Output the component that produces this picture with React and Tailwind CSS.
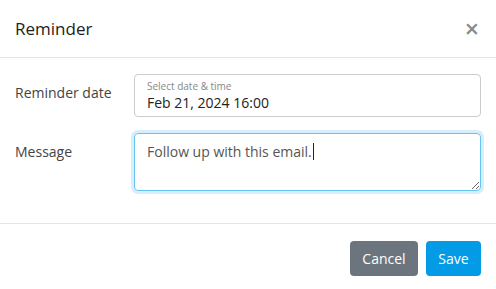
import { useState } from 'react'

export default function App() {
  const [message, setMessage] = useState('Follow up with this email.')

  return (
    <div className="w-[496px] h-[289px] bg-white text-[#333] overflow-hidden" style={{ fontFamily: '"Open Sans", "Noto Sans", sans-serif' }}>
      {/* header */}
      <div className="h-[58px] flex items-center justify-between pl-[15px] pr-[17px] border-b border-[#e5e5e5]">
        <h2 className="text-[17px] text-[#222] leading-none">Reminder</h2>
        <button className="text-[25px] leading-none font-semibold text-[#8a8a8a] -mt-[1px]">×</button>
      </div>

      {/* body */}
      <div className="pt-[16px] pb-[32px] px-[15px] flex flex-col gap-[16px]">
        <div className="flex">
          <label className="w-[119px] shrink-0 pt-[9px] text-[14px] leading-5 text-[#444]">Reminder date</label>
          <div className="flex-1 h-[43px] border border-[#ccc] rounded-[4px] px-[12px] pt-[5px] flex flex-col">
            <span className="text-[10px] leading-[13px] text-[#888]">Select date &amp; time</span>
            <span className="text-[14px] leading-[20px] text-[#222]">Feb 21, 2024 16:00</span>
          </div>
        </div>
        <div className="flex">
          <label className="w-[119px] shrink-0 pt-[9px] text-[14px] leading-5 text-[#444]">Message</label>
          <div className="flex-1 relative">
            <textarea
              value={message}
              onChange={e => setMessage(e.target.value)}
              className="block w-full h-[58px] border border-[#66c4f2] rounded-[4px] px-[12px] py-[8px] text-[14px] leading-5 text-[#555] outline-none ring-[3px] ring-[#d6effc]"
            />
            <span className="absolute left-[179px] top-[10px] w-px h-[17px] bg-[#222]" />
          </div>
        </div>
      </div>

      {/* footer */}
      <div className="border-t border-[#e5e5e5] pt-[17px] px-[15px] flex justify-end gap-[8px]">
        <button className="h-[35px] w-[68px] rounded-[4px] bg-[#6c757d] text-white text-[14px]">Cancel</button>
        <button className="h-[35px] w-[55px] rounded-[4px] bg-[#039be5] text-white text-[14px]">Save</button>
      </div>
    </div>
  )
}
